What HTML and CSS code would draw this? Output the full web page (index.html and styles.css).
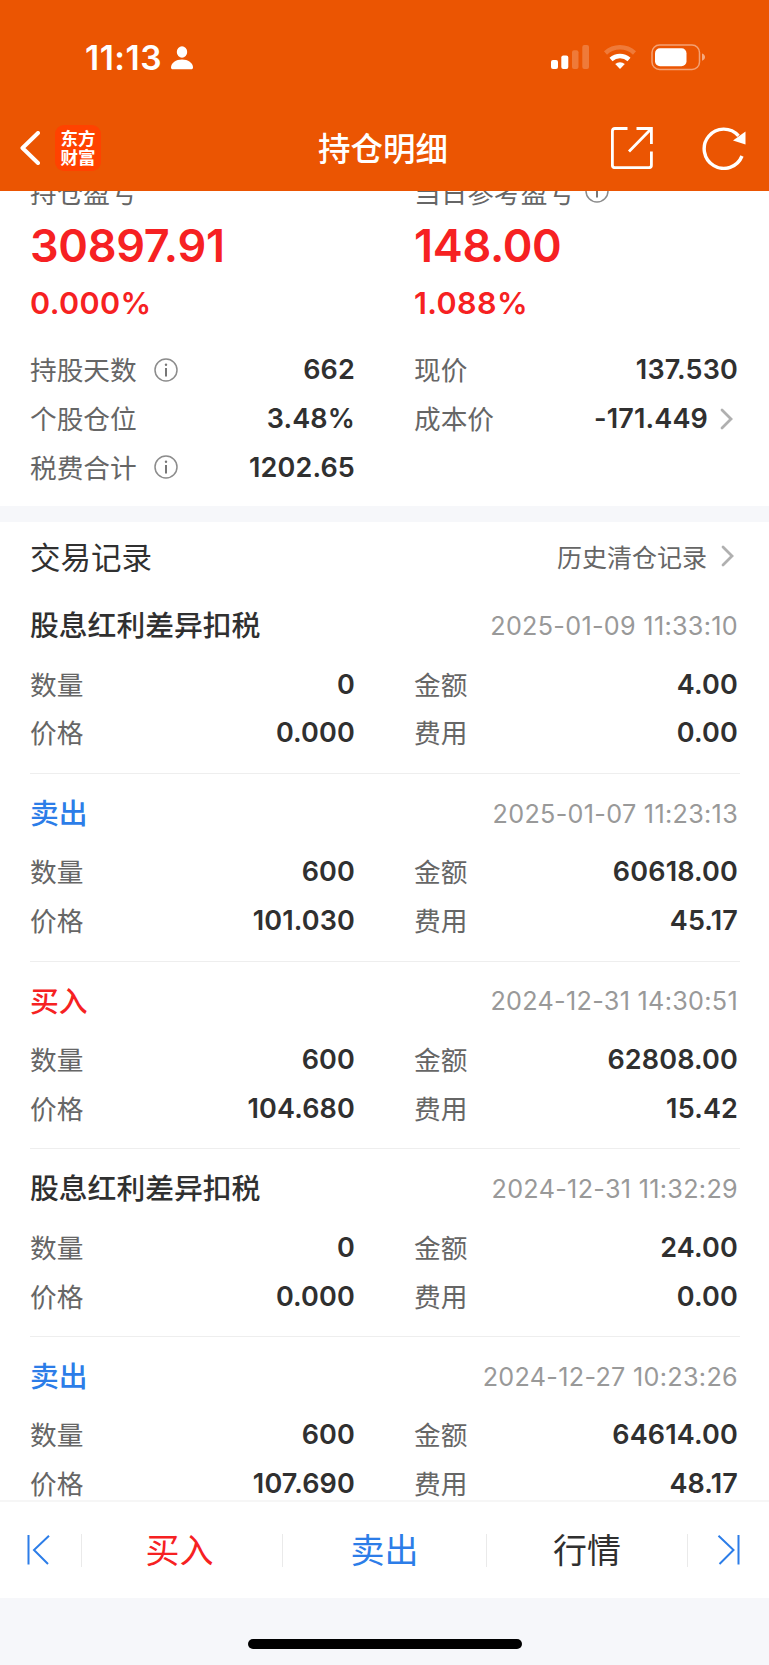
FILE: index.html
```html
<!DOCTYPE html>
<html lang="zh-CN">
<head>
  <meta charset="UTF-8">
  <meta name="viewport" content="width=device-width, initial-scale=1.0">
  <title>持仓明细</title>
  <link rel="stylesheet" href="styles.css">
</head>
<body>
  <svg width="0" height="0" class="defs">
    <symbol id="info" viewBox="0 0 24 24">
      <circle cx="12" cy="12" r="11" fill="none" stroke="#8c8c8c" stroke-width="1.5"/>
      <path d="M12 10v8.5" stroke="#777" stroke-width="2"/>
      <circle cx="12" cy="6.8" r="1.2" fill="#777"/>
    </symbol>
    <symbol id="arrow" viewBox="0 0 14 22">
      <path d="M2 2l9 9-9 9" fill="none" stroke="#b0b0b0" stroke-width="2.8" stroke-linecap="round"/>
    </symbol>
  </svg>

  <div class="app">
    <header>
      <div class="status">
        <span class="time">11:13</span>
        <svg class="person" width="22" height="24" viewBox="0 0 22 24">
          <ellipse cx="11" cy="6" rx="5.2" ry="5.8" fill="#fff"/>
          <path d="M0 21.5C0 17 5 13.6 11 13.6s11 3.4 11 7.9c0 1.2-.6 1.8-2 1.8H2c-1.4 0-2-.6-2-1.8z" fill="#fff"/>
        </svg>
        <svg class="signal" width="154" height="28" viewBox="0 0 154 28">
          <g fill="#fff">
            <rect x="0" y="16" width="7" height="9" rx="2"/>
            <rect x="10.3" y="11.5" width="7" height="13.5" rx="2"/>
            <rect x="21" y="6.3" width="6.5" height="18.7" rx="2" opacity=".22"/>
            <rect x="31.3" y="1" width="6.7" height="24" rx="2" opacity=".22"/>
            <path d="M69 25l-4.8-4.9a7.3 7.3 0 0 1 9.6 0z"/>
            <rect x="104" y="4.3" width="31.5" height="18" rx="5"/>
            <path d="M151 9.5q3 1 3 3.6t-3 3.6z" opacity=".5"/>
          </g>
          <path d="M60 15.5a13.5 13.5 0 0 1 18 0" fill="none" stroke="#fff" stroke-width="4.5"/>
          <path d="M54.5 9a21.5 21.5 0 0 1 29 0" fill="none" stroke="#fff" stroke-width="4.5" opacity=".22"/>
          <rect x="101" y="1" width="47.5" height="24.5" rx="7.5" fill="none" stroke="#fff" stroke-width="1.5" opacity=".45"/>
        </svg>
      </div>
      <div class="nav">
        <svg class="back" width="20" height="34" viewBox="0 0 20 34">
          <path d="M18 2L2.5 17 18 32" fill="none" stroke="#fff" stroke-width="4" stroke-linecap="round" stroke-linejoin="round"/>
        </svg>
        <div class="logo">东方<br>财富</div>
        <h1>持仓明细</h1>
        <svg class="share" width="42" height="42" viewBox="0 0 42 42" fill="none" stroke="#fff" stroke-width="2.8">
          <path d="M16.5 1.5H4Q1.4 1.5 1.4 4v34.3q0 2.4 2.5 2.4h34q2.5 0 2.5-2.4V24.5"/>
          <path d="M25.5 1.5h14.9V17M39.5 2.5L18 24.5"/>
        </svg>
        <svg class="refresh" width="44" height="44" viewBox="0 0 44 44">
          <path d="M40 30A19.6 19.6 0 1 1 36.5 9.8" fill="none" stroke="#fff" stroke-width="3.4"/>
          <path d="M43.5 5.5v13L31 14.5z" fill="#fff"/>
        </svg>
      </div>
    </header>

    <main>
      <section class="summary">
        <div class="cols">
          <div>
            <div class="label">持仓盈亏</div>
            <div class="big">30897.91</div>
            <div class="rate">0.000%</div>
          </div>
          <div>
            <div class="label">当日参考盈亏<svg class="info near"><use href="#info"/></svg></div>
            <div class="big">148.00</div>
            <div class="rate">1.088%</div>
          </div>
        </div>
        <div class="cols">
          <div class="row"><span>持股天数<svg class="info"><use href="#info"/></svg></span><b>662</b></div>
          <div class="row"><span>现价</span><b>137.530</b></div>
          <div class="row"><span>个股仓位</span><b>3.48%</b></div>
          <div class="row"><span>成本价</span><b>-171.449<svg class="arrow"><use href="#arrow"/></svg></b></div>
          <div class="row"><span>税费合计<svg class="info"><use href="#info"/></svg></span><b>1202.65</b></div>
        </div>
      </section>

      <section class="records">
        <div class="records-head">
          <h2>交易记录</h2>
          <a>历史清仓记录<svg class="arrow"><use href="#arrow"/></svg></a>
        </div>

        <div class="record">
          <div class="record-head"><h3>股息红利差异扣税</h3><time>2025-01-09 11:33:10</time></div>
          <div class="cols">
            <div class="row"><span>数量</span><b>0</b></div>
            <div class="row"><span>金额</span><b>4.00</b></div>
            <div class="row"><span>价格</span><b>0.000</b></div>
            <div class="row"><span>费用</span><b>0.00</b></div>
          </div>
        </div>

        <div class="record">
          <div class="record-head"><h3 class="sell">卖出</h3><time>2025-01-07 11:23:13</time></div>
          <div class="cols">
            <div class="row"><span>数量</span><b>600</b></div>
            <div class="row"><span>金额</span><b>60618.00</b></div>
            <div class="row"><span>价格</span><b>101.030</b></div>
            <div class="row"><span>费用</span><b>45.17</b></div>
          </div>
        </div>

        <div class="record">
          <div class="record-head"><h3 class="buy">买入</h3><time>2024-12-31 14:30:51</time></div>
          <div class="cols">
            <div class="row"><span>数量</span><b>600</b></div>
            <div class="row"><span>金额</span><b>62808.00</b></div>
            <div class="row"><span>价格</span><b>104.680</b></div>
            <div class="row"><span>费用</span><b>15.42</b></div>
          </div>
        </div>

        <div class="record">
          <div class="record-head"><h3>股息红利差异扣税</h3><time>2024-12-31 11:32:29</time></div>
          <div class="cols">
            <div class="row"><span>数量</span><b>0</b></div>
            <div class="row"><span>金额</span><b>24.00</b></div>
            <div class="row"><span>价格</span><b>0.000</b></div>
            <div class="row"><span>费用</span><b>0.00</b></div>
          </div>
        </div>

        <div class="record">
          <div class="record-head"><h3 class="sell">卖出</h3><time>2024-12-27 10:23:26</time></div>
          <div class="cols">
            <div class="row"><span>数量</span><b>600</b></div>
            <div class="row"><span>金额</span><b>64614.00</b></div>
            <div class="row"><span>价格</span><b>107.690</b></div>
            <div class="row"><span>费用</span><b>48.17</b></div>
          </div>
        </div>
      </section>
    </main>

    <footer>
      <div class="tabs">
        <div class="tab"><svg width="24" height="30" viewBox="0 0 24 30" fill="none" stroke="#2c7de8" stroke-width="2"><path d="M2.5 0v29.5M23 .8L8 15l14 14"/></svg></div>
        <div class="tab buy">买入</div>
        <div class="tab sell">卖出</div>
        <div class="tab">行情</div>
        <div class="tab"><svg width="24" height="30" viewBox="0 0 24 30" fill="none" stroke="#2c7de8" stroke-width="2"><path d="M21.5 0v29.5M1.5 .8L16.5 15l-14 14"/></svg></div>
      </div>
      <div class="home"></div>
    </footer>
  </div>
</body>
</html>
```

FILE: styles.css
```css
* {
  box-sizing: border-box;
}
body {
  margin: 0;
  font-family: Inter, "Noto Sans CJK SC", sans-serif;
  color: #303030;
  background-color: #fff;
}
h1, h2, h3 {
  margin: 0;
  font-weight: 500;
}
svg {
  display: block;
  flex: none;
}
.defs {
  position: absolute;
}
.app {
  height: 1665px;
  display: flex;
  flex-direction: column;
  overflow: hidden;
}

/* header */
header {
  flex: none;
  height: 191px;
  background-color: #eb5502;
  color: #fff;
}
.status {
  height: 104px;
  padding: 12px 64px 0 85px;
  display: flex;
  align-items: center;
}
.time {
  width: 86px;
  font-size: 33.5px;
  font-weight: 600;
  letter-spacing: 0.5px;
  white-space: nowrap;
}
.signal {
  margin-left: auto;
}
.nav {
  height: 87px;
  padding: 0 23px 0 20px;
  display: flex;
  align-items: center;
}
.logo {
  width: 46px;
  height: 46px;
  margin-left: 15px;
  padding-top: 4px;
  border-radius: 9px;
  background-color: #ff4200;
  font-size: 17.5px;
  font-weight: 700;
  line-height: 19px;
  text-align: center;
}
h1 {
  margin-left: 217px;
  padding-top: 4px;
  font-size: 32.5px;
  line-height: 48px;
}
.share {
  margin-left: auto;
}
.refresh {
  margin-left: 49px;
}

/* content */
main {
  flex: 1;
  min-height: 0;
  overflow: hidden;
}
.cols {
  display: grid;
  grid-template-columns: 325px 324px;
  column-gap: 59px;
}
.summary {
  height: 331px;
  padding: 0 30px;
  border-bottom: 16px solid #f6f7fa;
}
.label {
  display: flex;
  align-items: center;
  height: 30px;
  margin-top: -15px;
  font-size: 26.7px;
  color: #666;
}
.big {
  height: 62px;
  margin-top: 9px;
  font-size: 45px;
  font-weight: 600;
  letter-spacing: -0.3px;
  line-height: 62px;
  color: #f62122;
}
.rate {
  height: 40px;
  margin: 6px 0 23px;
  font-size: 30.5px;
  font-weight: 580;
  letter-spacing: 0.4px;
  line-height: 40px;
  color: #f62122;
}
.row {
  display: flex;
  justify-content: space-between;
  align-items: center;
  height: 48.8px;
  font-size: 27px;
  line-height: 40px;
}
.row span {
  display: flex;
  align-items: center;
  font-size: 26.7px;
  color: #666;
}
.row b {
  display: flex;
  align-items: center;
  font-weight: 600;
  letter-spacing: 0.15px;
}
.info {
  width: 24px;
  height: 24px;
  margin-left: 17px;
  margin-top: -1px;
}
.info.near {
  margin-left: 11px;
}
.arrow {
  width: 14px;
  height: 22px;
  margin: 0 4px 0 12px;
}

/* records */
.records {
  padding: 0 29px 0 30px;
}
.records-head {
  display: flex;
  justify-content: space-between;
  align-items: center;
  height: 70px;
}
.records-head h2 {
  margin-top: -2px;
  font-size: 30.5px;
  font-weight: 400;
}
.records-head a {
  display: flex;
  align-items: center;
  margin-top: -2px;
  padding-right: 1px;
  font-size: 25px;
  color: #666;
}
.records-head .arrow {
  margin-left: 14px;
}
.record {
  height: 187.7px;
  padding-top: 9px;
  border-bottom: 1px solid #eee;
}
.record:nth-child(2) {
  height: 182px;
  padding-top: 3.3px;
}
.record-head {
  display: flex;
  justify-content: space-between;
  align-items: center;
  height: 62px;
  padding-right: 2px;
  margin-bottom: 3px;
}
.record-head h3 {
  margin-top: -5px;
  font-size: 28.8px;
}
time {
  margin-top: -1px;
  font-size: 25.2px;
  letter-spacing: 0.3px;
  color: #999;
}
h3.sell, .tab.sell {
  color: #2c7de8;
}
h3.buy, .tab.buy {
  color: #f62122;
}

/* bottom bar */
footer {
  flex: none;
  height: 165px;
  background-color: #f6f7fa;
}
.tabs {
  display: grid;
  grid-template-columns: 82px 201px 204px 201px 81px;
  align-items: center;
  height: 98px;
  border-top: 2px solid #f6f6f6;
  background-color: #fff;
}
.tab {
  display: flex;
  justify-content: center;
  align-items: center;
  height: 33px;
  padding-bottom: 4px;
  border-right: 1px solid #eaeaea;
  font-size: 34px;
}
.tab svg {
  margin-top: 4px;
}
.tab.buy {
  padding-right: 5px;
}
.tab:first-child {
  padding-right: 6px;
}
.tab:last-child {
  border: none;
}
.home {
  width: 274px;
  height: 10px;
  margin: 41px auto 0;
  border-radius: 5px;
  background-color: #000;
}
```
